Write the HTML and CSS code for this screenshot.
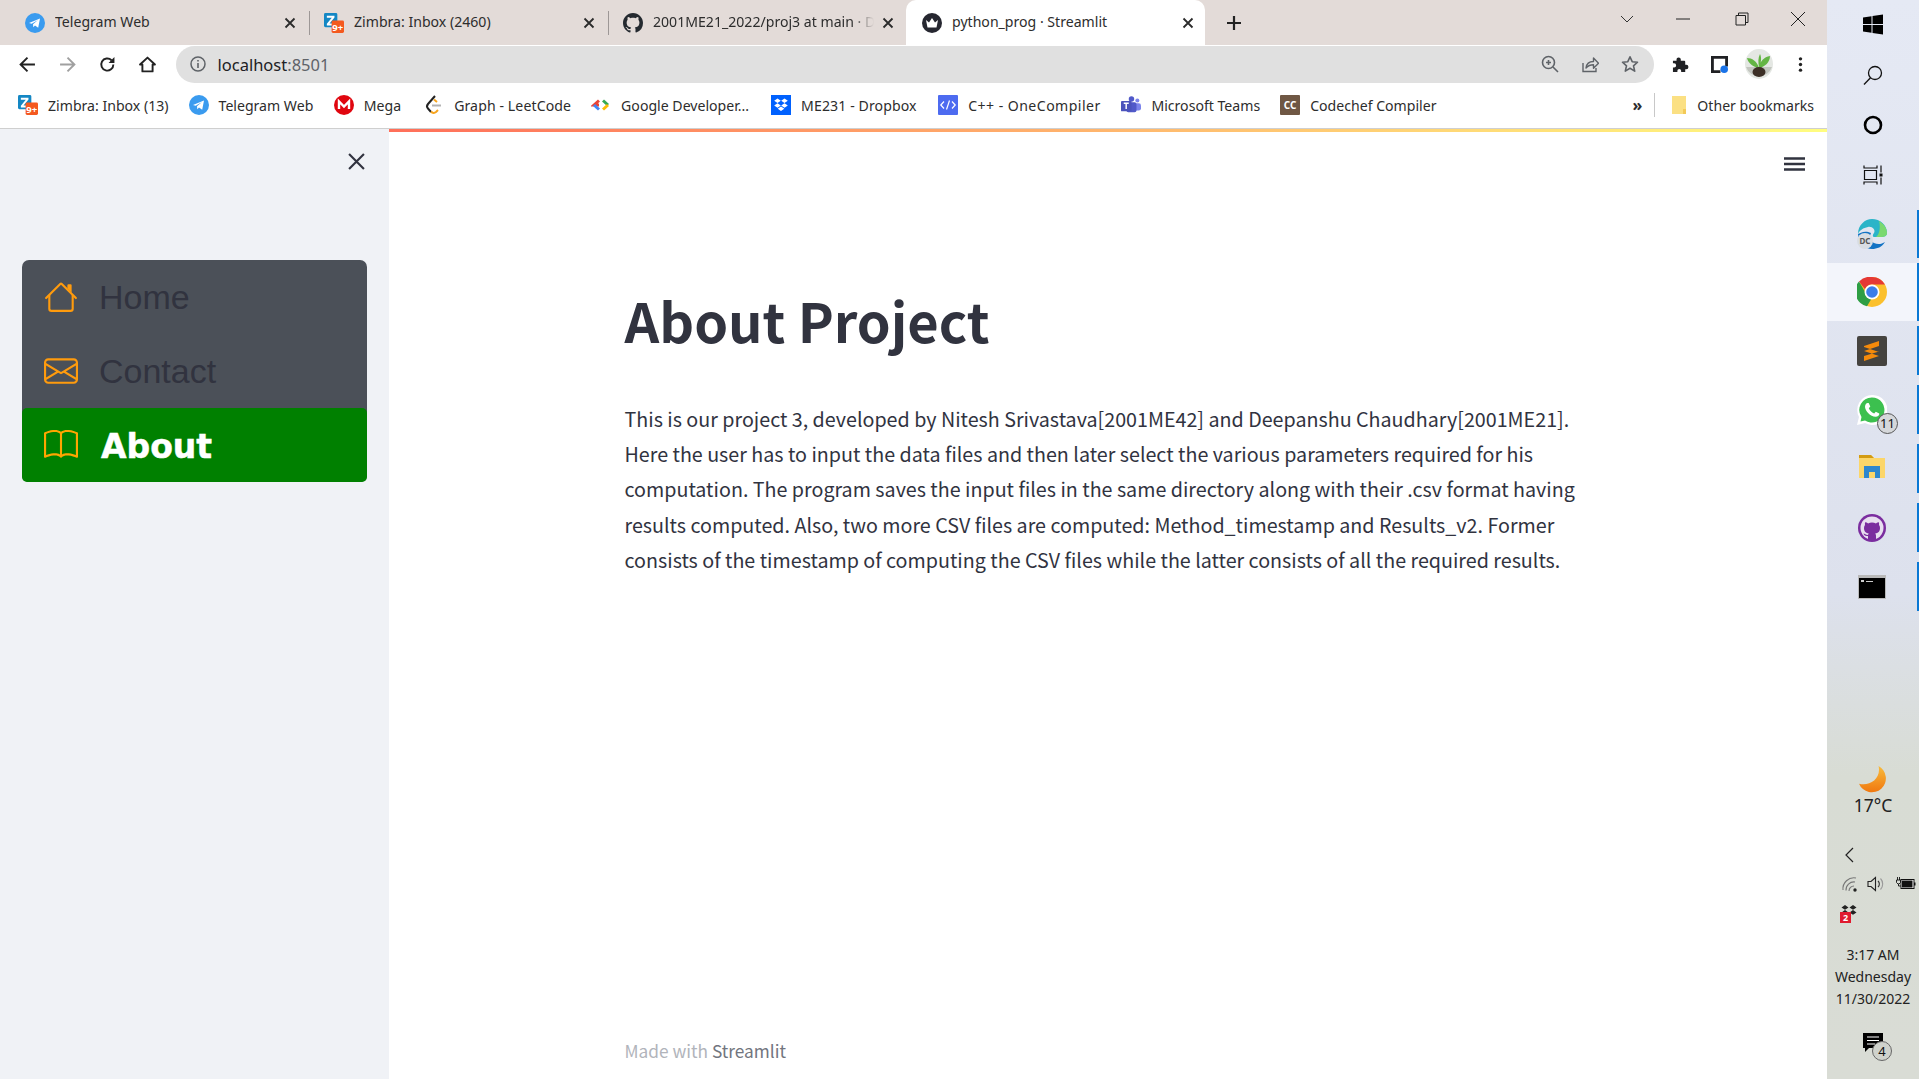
FILE: index.html
```html
<!DOCTYPE html>
<html lang="en">
<head>
<meta charset="utf-8">
<title>python_prog · Streamlit</title>
<link rel="stylesheet" href="styles.css">
</head>
<body>
<svg class="defs" width="0" height="0" aria-hidden="true">
  <defs>
    <linearGradient id="moon-g" x1="0" y1="0" x2="0" y2="1"><stop offset="0" stop-color="#f8bb3c"/><stop offset="1" stop-color="#f0780f"/></linearGradient>
    <symbol id="tg" viewBox="0 0 20 20"><circle cx="10" cy="10" r="10" fill="#3a9bef"/><path d="M4 10l11-4.6-1.8 9.4-3.2-2.3-1.7 1.7-.3-2.9 5-4.4-6.3 3.9z" fill="#fff"/></symbol>
    <symbol id="zim" viewBox="0 0 21 21"><rect x="0" y="0" width="14" height="15" rx="1.5" fill="#1487c4"/><path d="M3 3h8v1.8L5.8 11H11v2H3v-1.8L8.2 5H3z" fill="#fff"/><rect x="8" y="8" width="13" height="13" rx="1.5" fill="#f4591f"/><text x="14.5" y="18.4" class="badge9">9+</text></symbol>
    <symbol id="gh" viewBox="0 0 16 16"><path fill="#24292f" d="M8 0C3.58 0 0 3.58 0 8c0 3.54 2.29 6.53 5.47 7.59.4.07.55-.17.55-.38 0-.19-.01-.82-.01-1.49-2.01.37-2.53-.49-2.69-.94-.09-.23-.48-.94-.82-1.13-.28-.15-.68-.52-.01-.53.63-.01 1.08.58 1.23.82.72 1.21 1.87.87 2.33.66.07-.52.28-.87.51-1.07-1.78-.2-3.64-.89-3.64-3.95 0-.87.31-1.59.82-2.15-.08-.2-.36-1.02.08-2.12 0 0 .67-.21 2.2.82.64-.18 1.32-.27 2-.27s1.36.09 2 .27c1.53-1.04 2.2-.82 2.2-.82.44 1.1.16 1.92.08 2.12.51.56.82 1.27.82 2.15 0 3.07-1.87 3.75-3.65 3.95.29.25.54.73.54 1.48 0 1.07-.01 1.93-.01 2.2 0 .21.15.46.55.38A8.01 8.01 0 0 0 16 8c0-4.42-3.58-8-8-8z"/></symbol>
    <symbol id="crown" viewBox="0 0 20 20"><circle cx="10" cy="10" r="10" fill="#262730"/><path d="M4 7l3 2.4L10 5l3 4.400L16 7l-1.500 7.500h-9z" fill="#fff"/></symbol>
    <symbol id="close" viewBox="0 0 12 12"><path d="M1.500 1.500l9 9m0-9l-9 9" stroke="#2b2b2b" stroke-width="1.800" fill="none"/></symbol>
    <symbol id="hb-house" viewBox="0 0 16 16"><path fill-rule="evenodd" d="M2 13.5V7h1v6.5a.5.5 0 0 0 .5.5h9a.5.5 0 0 0 .5-.5V7h1v6.5a1.5 1.5 0 0 1-1.5 1.5h-9A1.5 1.5 0 0 1 2 13.5zm11-11V6l-2-2V2.5a.5.5 0 0 1 .5-.5h1a.5.5 0 0 1 .5.5z"/><path fill-rule="evenodd" d="M7.293 1.5a1 1 0 0 1 1.414 0l6.647 6.646a.5.5 0 0 1-.708.708L8 2.207 1.354 8.854a.5.5 0 1 1-.708-.708L7.293 1.5z"/></symbol>
    <symbol id="hb-env" viewBox="0 0 16 16"><path d="M0 4a2 2 0 0 1 2-2h12a2 2 0 0 1 2 2v8a2 2 0 0 1-2 2H2a2 2 0 0 1-2-2V4Zm2-1a1 1 0 0 0-1 1v.217l7 4.2 7-4.2V4a1 1 0 0 0-1-1H2Zm13 2.383-4.708 2.825L15 11.105V5.383Zm-.034 6.876-5.64-3.471L8 9.583l-1.326-.795-5.64 3.47A1 1 0 0 0 2 13h12a1 1 0 0 0 .966-.741ZM1 11.105l4.708-2.897L1 5.383v5.722Z"/></symbol>
    <symbol id="hb-book" viewBox="0 0 16 16"><path d="M1 2.828c.885-.37 2.154-.769 3.388-.893 1.33-.134 2.458.063 3.112.752v9.746c-.935-.53-2.12-.603-3.213-.493-1.18.12-2.37.461-3.287.811V2.828zm7.500-.141c.654-.689 1.782-.886 3.112-.752 1.234.124 2.503.523 3.388.893v9.923c-.918-.35-2.107-.692-3.287-.81-1.094-.111-2.278-.039-3.213.492V2.687zM8 1.783C7.015.936 5.587.81 4.287.94c-1.514.153-3.042.672-3.994 1.105A.5.5 0 0 0 0 2.500v11a.5.5 0 0 0 .707.455c.882-.4 2.303-.881 3.680-1.020 1.409-.142 2.590.087 3.223.877a.5.5 0 0 0 .780 0c.633-.790 1.814-1.019 3.222-.877 1.378.139 2.800.620 3.681 1.020A.5.5 0 0 0 16 13.500v-11a.5.5 0 0 0-.293-.455c-.952-.433-2.480-.952-3.994-1.105C10.413.809 8.985.936 8 1.783z"/></symbol>
  </defs>
</svg>

<div class="screen">
  <div class="browser">
    <div class="tabstrip">
      <div class="tab">
        <svg class="fav"><use href="#tg"/></svg><span class="tab-title">Telegram Web</span>
        <svg class="tab-close"><use href="#close"/></svg>
      </div>
      <div class="tab">
        <svg class="fav"><use href="#zim"/></svg><span class="tab-title">Zimbra: Inbox (2460)</span>
        <svg class="tab-close"><use href="#close"/></svg>
      </div>
      <div class="tab tab-last">
        <svg class="fav"><use href="#gh"/></svg><span class="tab-title tab-fade">2001ME21_2022/proj3 at main · D</span>
        <svg class="tab-close"><use href="#close"/></svg>
      </div>
      <div class="tab tab-active">
        <svg class="fav"><use href="#crown"/></svg><span class="tab-title">python_prog · Streamlit</span>
        <svg class="tab-close"><use href="#close"/></svg>
      </div>
      <svg class="new-tab" viewBox="0 0 16 16"><path d="M8 1v14M1 8h14" stroke="#222" stroke-width="2.200"/></svg>
      <div class="win-controls">
        <svg class="win-chev" viewBox="0 0 14 8"><path d="M1 1l6 6 6-6" stroke="#333" fill="none"/></svg>
        <svg class="win-btn" viewBox="0 0 14 14"><path d="M0 7h14" stroke="#222"/></svg>
        <svg class="win-btn win-restore" viewBox="0 0 14 14"><path d="M3.500 3.500V1h9.500v9.500h-2.500M1 3.500h9.500V13H1z" stroke="#222" fill="none"/></svg>
        <svg class="win-btn win-x" viewBox="0 0 14 14"><path d="M0 0l14 14M14 0L0 14" stroke="#222"/></svg>
      </div>
    </div>

    <div class="toolbar">
      <svg class="tool" viewBox="0 0 16 16"><path d="M15 8H2m6-6.500L1.500 8 8 14.500" stroke="#222" stroke-width="1.800" fill="none"/></svg>
      <svg class="tool" viewBox="0 0 16 16"><path d="M1 8h13M8 1.500L14.500 8 8 14.500" stroke="#a0a0a0" stroke-width="1.800" fill="none"/></svg>
      <svg class="tool" viewBox="0 0 16 16"><path d="M13.500 8A5.700 5.700 0 1 1 11.800 4" stroke="#222" stroke-width="1.800" fill="none"/><path d="M14.500 1v5.500H9z" fill="#222"/></svg>
      <svg class="tool" viewBox="0 0 16 16"><path d="M8 1.500L1 8h2.200v6.500h9.600V8H15z" stroke="#222" stroke-width="1.800" fill="none" stroke-linejoin="round"/></svg>
      <div class="omnibox">
        <svg class="info" viewBox="0 0 16 16"><circle cx="8" cy="8" r="7" fill="none" stroke="#5f6368" stroke-width="1.500"/><path d="M8 7v5M8 4v1.600" stroke="#5f6368" stroke-width="1.600"/></svg>
        <span class="url">localhost<span class="url-port">:8501</span></span>
        <span class="omni-right">
          <svg class="omni-icon" viewBox="0 0 18 18"><circle cx="7.500" cy="7.500" r="6" fill="none" stroke="#5f6368" stroke-width="1.600"/><path d="M12 12l5 5M5 7.500h5M7.500 5v5" stroke="#5f6368" stroke-width="1.600"/></svg>
          <svg class="omni-icon" viewBox="0 0 18 18"><path d="M2 8v8.500h13V13" stroke="#5f6368" stroke-width="1.400" fill="none"/><path d="M5 13c.5-4 3.500-6.500 7.500-6.500V3l5 5.200-5 5V9.800C9.500 9.800 7 10.800 5 13z" stroke="#5f6368" stroke-width="1.400" fill="none" stroke-linejoin="round"/></svg>
          <svg class="omni-icon" viewBox="0 0 18 18"><path d="M9 1.800l2.200 4.900 5.300.5-4 3.600 1.200 5.300L9 13.300l-4.700 2.800 1.200-5.300-4-3.600 5.300-.5z" stroke="#5f6368" stroke-width="1.600" fill="none" stroke-linejoin="round"/></svg>
        </span>
      </div>
      <div class="tool-right">
        <svg class="tool" viewBox="0 0 18 18"><path d="M7 1.500c1.300 0 2.300 1 2.300 2.200V5H13a1 1 0 0 1 1 1v3.300h1.100a2.300 2.300 0 0 1 0 4.600H14V17H9.700v-1.300a2 2 0 0 0-4 0V17H1v-4.800h1.200a2.200 2.200 0 0 0 0-4.400H1V5h3.800V3.700C4.800 2.500 5.700 1.500 7 1.500z" fill="#202124"/></svg>
        <svg class="tool" viewBox="0 0 18 18"><path d="M0 0h18v11h-3V3H3v12h7v3H0z" fill="#202124"/><circle cx="14" cy="14" r="4" fill="#1a73e8"/></svg>
        <svg class="avatar" viewBox="0 0 28 30"><ellipse cx="14" cy="15" rx="14" ry="15" fill="#e4e7e3"/><path d="M1 18a14 15 0 0 0 26 0z" fill="#c3c6c0"/><path d="M14 19C12 12 7 9 2 9c1 5 6 9 12 10zm0 0c1-7 5-11 11-12 0 6-5 11-11 12zm0-1c-1-5-1-9 1-13 2 4 1 9-1 13z" fill="#63b544"/><ellipse cx="14" cy="23" rx="6.500" ry="5" fill="#3d3027"/></svg>
        <svg class="tool" viewBox="0 0 18 18"><circle cx="9" cy="3" r="1.800" fill="#222"/><circle cx="9" cy="9" r="1.800" fill="#222"/><circle cx="9" cy="15" r="1.800" fill="#222"/></svg>
      </div>
    </div>

    <div class="bookmarks">
      <span class="bm bm-zimbra"><svg class="fav"><use href="#zim"/></svg>Zimbra: Inbox (13)</span>
      <span class="bm bm-telegram"><svg class="fav"><use href="#tg"/></svg>Telegram Web</span>
      <span class="bm bm-mega"><svg class="fav" viewBox="0 0 20 20"><circle cx="10" cy="10" r="10" fill="#e0060f"/><path d="M5 14V6.500l5 5 5-5V14" stroke="#fff" stroke-width="2.400" fill="none"/></svg>Mega</span>
      <span class="bm bm-leet"><svg class="fav" viewBox="0 0 20 20"><path d="M11 1L4 9c-1.500 1.800-1.500 3 0 4.500l3 3.500" stroke="#222" stroke-width="2" fill="none"/><path d="M7 16.500c1.500 1.800 3.500 1.800 5 .5l2-2" stroke="#f7a41d" stroke-width="2" fill="none"/><path d="M8 10.500h9" stroke="#b3b3b3" stroke-width="2"/><path d="M10 4.500l3 2.500" stroke="#f7a41d" stroke-width="2"/></svg>Graph - LeetCode</span>
      <span class="bm"><svg class="fav" viewBox="0 0 20 20"><path d="M8 5.500L3 10h5" stroke="#ea4335" stroke-width="3" fill="none"/><path d="M3 10l5 4.500" stroke="#4285f4" stroke-width="3" fill="none"/><path d="M12 5.500l5 4.500" stroke="#34a853" stroke-width="3" fill="none"/><path d="M17 10l-5 4.500" stroke="#fbbc05" stroke-width="3" fill="none"/></svg>Google Developer...</span>
      <span class="bm bm-dropbox"><svg class="fav" viewBox="0 0 20 20"><rect width="20" height="20" fill="#0061fe"/><path d="M6.500 3.500l3.300 2.200-3.300 2.200-3.300-2.200zm7 0l3.300 2.200-3.300 2.200-3.300-2.200zm-7 4.800l3.300 2.200-3.300 2.200-3.300-2.200zm7 0l3.300 2.200-3.300 2.200-3.300-2.200zM10 11.500l3.300 2.200L10 16l-3.300-2.300z" fill="#fff"/></svg>ME231 - Dropbox</span>
      <span class="bm bm-onecomp"><svg class="fav" viewBox="0 0 20 20"><rect width="20" height="20" rx="1" fill="#4d6bf0"/><path d="M6 6.500L2.800 10 6 13.500M14 6.500l3.200 3.500-3.200 3.500M11.500 5.500l-3 9" stroke="#fff" stroke-width="1.200" fill="none"/></svg>C++ - OneCompiler</span>
      <span class="bm bm-teams"><svg class="fav" viewBox="0 0 22 20"><circle cx="18" cy="5" r="2.200" fill="#7b83eb"/><rect x="14" y="8" width="8" height="8" rx="2.500" fill="#7b83eb"/><circle cx="11.500" cy="3.500" r="3" fill="#5059c9"/><rect x="6" y="7" width="11" height="11" rx="2" fill="#5059c9"/><rect x="0" y="5.500" width="11.500" height="11.500" rx="1" fill="#4b53bc"/><path d="M3 8h5.500M5.700 8v6.500" stroke="#fff" stroke-width="1.600"/></svg>Microsoft Teams</span>
      <span class="bm"><svg class="fav" viewBox="0 0 20 20"><rect width="20" height="20" rx="1" fill="#6f5744"/><text x="10" y="14.200" class="cc">CC</text></svg>Codechef Compiler</span>
      <span class="bm-more">»</span>
      <span class="bm-sep"></span>
      <span class="bm"><svg class="fav fav-folder" viewBox="0 0 16 20"><path d="M1 1h14v18H1z" fill="#fbe083"/><path d="M12 14h3v5h-3z" fill="#f3ca58"/></svg>Other bookmarks</span>
    </div>

    <div class="rule"></div>

    <div class="app">
      <aside class="sidebar">
        <svg class="side-close" viewBox="0 0 16 16"><path d="M1 1l14 14M15 1L1 15" stroke="#31333f" stroke-width="2"/></svg>
        <nav class="menu">
          <a class="menu-item"><svg class="menu-icon"><use href="#hb-house"/></svg><span>Home</span></a>
          <a class="menu-item"><svg class="menu-icon"><use href="#hb-env"/></svg><span>Contact</span></a>
          <a class="menu-item menu-active"><svg class="menu-icon"><use href="#hb-book"/></svg><span>About</span></a>
        </nav>
      </aside>
      <main class="main">
        <div class="decoration"></div>
        <div class="main-head">
          <svg class="hamburger" viewBox="0 0 21 14"><path d="M0 1.500h21M0 7h21M0 12.500h21" stroke="#31333f" stroke-width="2.400"/></svg>
        </div>
        <div class="block">
          <h1 class="title">About Project</h1>
          <p class="body-text">This is our project 3, developed by Nitesh Srivastava[2001ME42] and Deepanshu Chaudhary[2001ME21]. Here the user has to input the data files and then later select the various parameters required for his computation. The program saves the input files in the same directory along with their .csv format having results computed. Also, two more CSV files are computed: Method_timestamp and Results_v2. Former consists of the timestamp of computing the CSV files while the latter consists of all the required results.</p>
        </div>
        <footer class="foot">Made with <span class="foot-link">Streamlit</span></footer>
      </main>
    </div>
  </div>

  <aside class="taskbar">
    <svg class="tb-sys tb-win" viewBox="0 0 20 20"><path d="M0 3l8.500-1.200V9.500H0zM9.500 1.600L20 0v9.500H9.500zM0 10.500h8.500v7.700L0 17zM9.500 10.500H20V20L9.500 18.400z" fill="#000"/></svg>
    <svg class="tb-sys" viewBox="0 0 20 20"><circle cx="12" cy="8" r="6.500" fill="none" stroke="#111" stroke-width="1.300"/><path d="M7.500 12.700L1 19.500" stroke="#111" stroke-width="1.300"/></svg>
    <svg class="tb-sys" viewBox="0 0 20 20"><circle cx="10" cy="10" r="8" fill="none" stroke="#000" stroke-width="2.600"/></svg>
    <svg class="tb-sys" viewBox="0 0 20 20"><path d="M1 .5v2.500h13V.5M1.500 5.500h12v9h-12zM1 19.500V17h13v2.500M18 .5v7M18 12.500v7" stroke="#111" stroke-width="1.200" fill="none"/><rect x="16.500" y="8.500" width="3" height="3" fill="#111"/></svg>

    <div class="tb-app tb-first">
      <svg class="tb-icon" viewBox="0 0 30 30"><path d="M1 15C1 6 8 0 15 0c8 0 15 6 15 14 0 3-3 4-6 4h-7c-2 0-1-3 0-4 2-3-2-7-6-6-5 1-8 3-10 7z" fill="#2bb4c8"/><path d="M22 2c5 3 8 7 8 12 0 3-3 4-6 4h-5c3-2 5-9 3-16z" fill="#7ad96f"/><path d="M1 15c0 8 6 15 14 15 5 0 10-2 13-7-3 2-7 3-11 1-4-2-5-6-3-10-6-3-11 0-13 1z" fill="#1273c4"/><circle cx="8" cy="22" r="8" fill="#d8dde3"/><text x="8" y="25" class="dc">DC</text></svg>
      <i class="tb-mark"></i>
    </div>
    <div class="tb-app tb-active">
      <svg class="tb-icon" viewBox="0 0 30 30"><circle cx="15" cy="15" r="15" fill="#fbc02d"/><path d="M15 0a15 15 0 0 1 13 7.500H15a7.500 7.500 0 0 0-7 4.800L2 4.500A15 15 0 0 1 15 0z" fill="#e53935"/><path d="M2 4.500l7 12a7.500 7.500 0 0 0 5 6L10 29.200A15 15 0 0 1 2 4.500z" fill="#2e9e44"/><circle cx="15" cy="15" r="7.500" fill="#fff"/><circle cx="15" cy="15" r="5.800" fill="#3b7de8"/></svg>
      <i class="tb-mark"></i>
    </div>
    <div class="tb-app tb-sublime">
      <svg class="tb-icon" viewBox="0 0 30 30"><rect width="30" height="30" rx="2" fill="#45433f"/><path d="M22 5L7 10v5l15-5zM7 11l15 5v4L7 15zM22 15.500L7 20v5l15-5z" fill="#f58a0a"/></svg>
      <i class="tb-mark"></i>
    </div>
    <div class="tb-app tb-gap">
      <span class="tb-wrap">
        <svg class="tb-icon" viewBox="0 0 30 30"><path d="M15 0a15 15 0 0 0-13 22L0 30l8-2A15 15 0 1 0 15 0z" fill="#fff"/><path d="M15 2.500A12.500 12.500 0 0 0 4.500 22L3.500 26.500 8 25.400A12.500 12.500 0 1 0 15 2.500z" fill="#3cc04f"/><path d="M10.500 8c-1 0-2.500 1.500-2.500 3.800 0 4 5.500 10 10.500 10 2.500 0 4-1.800 3.800-3.300l-3.500-1.800-1.600 1.800c-2-.7-4.500-3-5.400-5.200l1.500-1.700L11.700 8z" fill="#fff"/></svg>
        <span class="tb-badge">11</span>
      </span>
      <i class="tb-mark"></i>
    </div>
    <div class="tb-app tb-gap">
      <svg class="tb-icon" viewBox="0 0 30 30"><path d="M2 1h12l3 3h11v20H2z" fill="#fcd669"/><path d="M2 1h12l3 3H2z" fill="#d39b12"/><path d="M7 24V12h16v12h-5v-6h-6v6z" fill="#2f87cd"/></svg>
      <i class="tb-mark"></i>
    </div>
    <div class="tb-app tb-gap">
      <svg class="tb-icon" viewBox="0 0 30 30"><circle cx="15" cy="15" r="14" fill="#7b2d9f"/><circle cx="15" cy="15" r="11.500" fill="#e8dff0"/><path d="M11 27v-4c-3 .5-4-1-4.500-2.500 1.500.2 2 1.500 4.500 1.500.2-.8.5-1.200.8-1.500C9 20 7 18.500 7 15c0-1.200.4-2.200 1-3-.2-.7-.2-1.800.2-2.700 1.200 0 2.300.7 2.800 1.100a11 11 0 0 1 8 0c.6-.4 1.600-1.100 2.800-1.100.4.900.4 2 .2 2.700.7.800 1 1.800 1 3 0 3.500-2 5-4.800 5.500.5.500.8 1.200.8 2.500v4l-4 1z" fill="#7b2d9f"/></svg>
      <i class="tb-mark"></i>
    </div>
    <div class="tb-app tb-gap">
      <svg class="tb-icon" viewBox="0 0 30 30"><rect x="1" y="3" width="28" height="24" fill="#b9b9b9"/><rect x="2" y="6" width="26" height="20" fill="#000"/><path d="M4 8h3v2H4zm5 1h7v1H9z" fill="#ccc"/></svg>
      <i class="tb-mark"></i>
    </div>

    <div class="tray">
      <svg class="moon" viewBox="0 0 30 30"><path d="M21 0A15 15 0 1 1 0 19C11 22 24 14 21 0z" fill="url(#moon-g)"/></svg>
      <span class="temp">17°C</span>
      <svg class="tray-chev" viewBox="0 0 10 16"><path d="M9 1L2 8l7 7" stroke="#222" stroke-width="1.200" fill="none"/></svg>
      <div class="tray-row">
        <svg class="tray-icon" viewBox="0 0 18 18"><path d="M2 15a11 11 0 0 1 13-12M5 15.500a8 8 0 0 1 9-8.500M8 16a5 5 0 0 1 5-5" stroke="#777" fill="none" stroke-width="1.100"/><circle cx="14" cy="15" r="1.700" fill="#222"/></svg>
        <svg class="tray-icon" viewBox="0 0 18 18"><path d="M1 6.500h3L8.500 2.500v13L4 11.500H1z" stroke="#222" stroke-width="1.100" fill="none"/><path d="M11 6a4 4 0 0 1 0 6" stroke="#333" fill="none" stroke-width="1.100"/><path d="M13.500 3.500a8 8 0 0 1 0 11" stroke="#999" fill="none" stroke-width="1.100"/></svg>
        <svg class="tray-batt" viewBox="0 0 20 13"><path d="M1.500 0v3M3.500 0v3M.5 3h4v2.500L3 7H2L.5 5.500zM2.500 7v2H5" stroke="#111" stroke-width=".9" fill="none"/><rect x="5" y="2.500" width="13" height="9" fill="#fff" stroke="#111"/><rect x="6" y="3.500" width="10.500" height="7" fill="#111"/><rect x="18" y="5.500" width="1.500" height="3" fill="#111"/></svg>
      </div>
      <svg class="tray-drop" viewBox="0 0 20 20"><path d="M5 1l3.500 2.400L5 5.800 1.500 3.400zm8 0l3.500 2.400L13 5.800 9.500 3.400zM5 6l3.500 2.400L5 10.800 1.500 8.400zm8 0l3.500 2.400-3.500 2.400-3.500-2.400z" fill="#222"/><rect x="0" y="8" width="11" height="11" fill="#e01b2f"/><text x="5.500" y="17" class="two">2</text></svg>
      <div class="clock">3:17 AM<br>Wednesday<br>11/30/2022</div>
      <span class="notif">
        <svg class="notif-icon" viewBox="0 0 20 20"><path d="M0 0h20v15H6l-4 4v-4H0z" fill="#000"/><path d="M4 4h12M4 7.500h12M4 11h8" stroke="#fff"/></svg>
        <span class="notif-badge">4</span>
      </span>
    </div>
  </aside>
</div>
</body>
</html>
```
FILE: styles.css
```css
* { box-sizing: border-box; }
html, body { margin: 0; height: 100%; overflow: hidden; }
body { font-family: "Noto Sans", sans-serif; color: #222; background: #fff; }
.defs { position: absolute; }
.screen { display: flex; width: 1919px; height: 1079px; }

.browser { flex: 1; display: flex; flex-direction: column; min-width: 0; }

/* tab strip */
.tabstrip { display: flex; align-items: center; height: 45px; background: #e3dbd8; padding-left: 8px; flex: none; }
.tab { display: flex; align-items: center; width: 299px; height: 100%; padding: 0 10px 0 17px; position: relative; font-size: 14.1px; color: #2d2d2d; }
.tab::after { content: ""; position: absolute; right: -3px; top: 11px; height: 24px; width: 1px; background: #9d9796; }
.tab-last::after, .tab-active::after { display: none; }
.tab-active { background: #fff; border-radius: 10px 10px 0 0; margin-left: 1px; padding-left: 16px; }
.tab-title { flex: 1; white-space: nowrap; overflow: hidden; padding-bottom: 2px; }
.fav { width: 20px; height: 20px; flex: none; margin-right: 10px; }
.fav-folder { width: 16px; }
.badge9 { font: 700 10px "Noto Sans", sans-serif; fill: #fff; text-anchor: middle; }
.cc { font: 700 10px "Noto Sans", sans-serif; fill: #fff; text-anchor: middle; }
.dc { font: 700 8px "Noto Sans", sans-serif; fill: #555; text-anchor: middle; }
.two { font: 700 9px "Noto Sans", sans-serif; fill: #fff; text-anchor: middle; }
.tab-fade { -webkit-mask-image: linear-gradient(90deg, #000 90%, transparent); mask-image: linear-gradient(90deg, #000 90%, transparent); }
.tab-close { width: 12px; height: 12px; flex: none; margin: 0 1.5px 0 8px; }
.new-tab { width: 16px; height: 16px; margin-left: 20.5px; flex: none; }
.win-controls { margin-left: auto; display: flex; align-items: center; height: 100%; padding-right: 22px; padding-bottom: 7px; }
.win-chev { width: 14px; height: 8px; margin-right: 42px; }
.win-btn { width: 14px; height: 14px; }
.win-restore { margin-left: 45px; }
.win-x { margin-left: 42px; }

/* toolbar */
.toolbar { display: flex; align-items: center; height: 42px; background: #fff; padding: 0 0 4px 19px; flex: none; }
.tool { width: 17px; height: 17px; flex: none; margin-right: 23px; }
.omnibox { display: flex; align-items: center; width: 1478px; height: 37px; margin-left: -3.5px; border-radius: 19px; background: #e0e0e0; padding: 0 15px 0 14px; flex: none; }
.info { width: 16px; height: 16px; flex: none; margin-right: 12px; }
.url { font-size: 16.5px; padding-top: 1px; color: #202124; }
.url-port { color: #5f6368; }
.omni-right { margin-left: auto; display: flex; gap: 22px; }
.omni-icon { width: 18px; height: 18px; }
.tool-right { display: flex; align-items: center; margin-left: 18px; }
.tool-right .tool { margin-right: 22.5px; }
.avatar { width: 28px; height: 30px; margin: 0 19.5px 0 -6px; flex: none; }

/* bookmarks */
.bookmarks { display: flex; align-items: center; height: 41px; background: #fff; padding: 0 13px 5px 18px; flex: none; font-size: 14.1px; color: #2d2d2d; }
.bm { display: flex; align-items: center; white-space: nowrap; margin-right: 22px; }
.bm:last-child { margin-right: 0; }
.bm-zimbra { margin-right: 20px; }
.bm-telegram { margin-right: 20.5px; }
.bm-mega { margin-right: 23px; }
.bm-leet { margin-right: 20px; letter-spacing: .1px; }
.bm-dropbox { letter-spacing: .1px; margin-right: 21.500px; }
.bm-onecomp { letter-spacing: .45px; margin-right: 20.7px; }
.bm-teams { margin-right: 20px; }
.bm-more { margin-left: auto; font-weight: 700; font-size: 16px; margin-right: 12px; }
.bm-sep { width: 1px; height: 24px; background: #c8c8c8; margin-right: 16px; }
.rule { height: 1px; background: #cfcfcf; flex: none; }

/* app */
.app { flex: 1; display: flex; min-height: 0; }
.sidebar { width: 389px; flex: none; background: #f0f2f6; padding: 0 22px; display: flex; flex-direction: column; }
.side-close { width: 17px; height: 17px; margin: 24px 0 0 326px; flex: none; }
.menu { margin-top: 90px; background: #4b5058; border-radius: 7px; display: flex; flex-direction: column; }
.menu-item { display: flex; align-items: center; height: 74px; padding-left: 22px; font: 34px/1 "Liberation Sans", sans-serif; color: #31333f; }
.menu-icon { width: 34px; height: 34px; fill: #ff9b0d; margin-right: 21px; flex: none; }
.menu-active { background: #008000; color: #fff; border-radius: 5px; font: 700 33px/1 "DejaVu Sans", sans-serif; -webkit-text-stroke: .5px #fff; padding-top: 2px; }
.menu-active .menu-icon { fill: #ffa500; margin: -3px 23px 0 0; }

.main { flex: 1; display: flex; flex-direction: column; background: #fff; min-width: 0; }
.decoration { height: 3px; background: linear-gradient(90deg, #ff6f5a, #fffd80); flex: none; }
.main-head { display: flex; justify-content: flex-end; padding: 24.5px 22px 0 0; flex: none; }
.hamburger { width: 21px; height: 14px; }
.block { width: 967px; margin: 0 auto; padding-top: 105px; }
.title { margin: 0; font: 700 54.2px/87px "Noto Sans CJK JP", "Noto Sans", sans-serif; color: #31333f; }
.body-text { margin: 38px 0 0; font: 400 19.7px/35.4px "Noto Sans CJK JP", "Noto Sans", sans-serif; color: #31333f; }
.foot { width: 967px; margin: auto auto 16.5px; font: 400 17.3px/24px "Noto Sans CJK JP", "Noto Sans", sans-serif; color: #b1b4bb; }
.foot-link { color: #72757e; }

/* taskbar */
.taskbar { width: 92px; flex: none; display: flex; flex-direction: column; align-items: stretch; background: linear-gradient(180deg, #e5e9f4 0%, #dde1ed 55%, #d8dcd4 72%, #d9dcd5 100%); }
.tb-sys { width: 20px; height: 20px; margin: 15px auto 15px; flex: none; }
.tb-win { height: 21px; margin-top: 14px; }
.tb-app { position: relative; height: 58px; display: flex; align-items: center; justify-content: center; padding-right: 2px; flex: none; }
.tb-first { margin-top: 5px; }
.tb-active { background: #f3f5fb; }
.tb-sublime { height: 59px; }
.tb-gap { height: 59px; }
.tb-icon { width: 30px; height: 30px; display: block; }
.tb-wrap { position: relative; display: block; width: 30px; height: 30px; }
.tb-mark { position: absolute; right: 0; top: 5px; bottom: 5px; width: 2px; background: #0a78d4; }
.tb-active .tb-mark { top: 0; bottom: 0; }
.tb-badge { position: absolute; right: -11px; bottom: -9px; width: 21px; height: 21px; border-radius: 50%; border: 1px solid #555; background: #d5d7da; font-size: 13px; line-height: 19px; text-align: center; color: #111; }
.tray { margin-top: auto; display: flex; flex-direction: column; align-items: center; padding-bottom: 26px; color: #222; }
.moon { width: 28px; height: 28px; margin-bottom: 1px; }
.temp { font-size: 17.5px; line-height: 20px; }
.tray-chev { width: 10px; height: 16px; align-self: flex-start; margin: 32px 0 0 17px; }
.tray-row { display: flex; align-items: center; width: 100%; padding-left: 14px; margin-top: 12px; gap: 8px; }
.tray-icon { width: 18px; height: 18px; flex: none; }
.tray-batt { width: 20px; height: 13px; flex: none; margin-left: 3px; }
.tray-drop { width: 20px; height: 20px; align-self: flex-start; margin: 11.5px 0 0 13px; }
.clock { font-size: 14px; line-height: 22px; text-align: center; margin-top: 20px; white-space: nowrap; }
.notif { position: relative; display: block; width: 20px; height: 20px; margin-top: 23px; }
.notif-icon { width: 20px; height: 20px; display: block; }
.notif-badge { position: absolute; left: 9px; top: 8px; width: 20px; height: 20px; border-radius: 50%; border: 1px solid #666; background: #cfd2cc; font-size: 13px; line-height: 18px; text-align: center; color: #111; }
```
